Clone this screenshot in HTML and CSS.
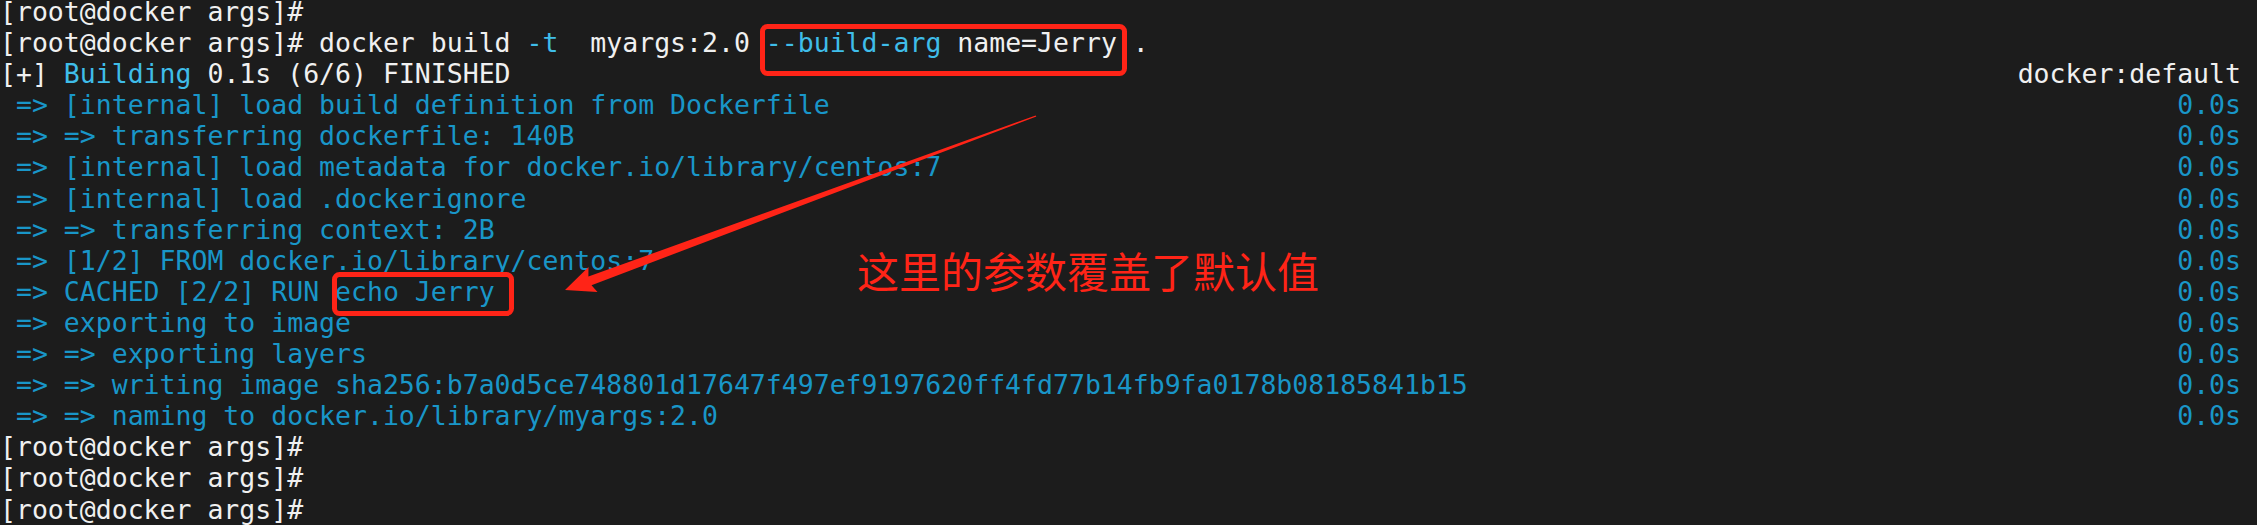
FILE: index.html
```html
<!DOCTYPE html>
<html lang="zh-CN">
<head>
<meta charset="utf-8">
<title>docker build</title>
<link rel="stylesheet" href="styles.css">
</head>
<body>
<div class="stage">
  <div class="term">
    <div class="ln"><span class="w">[root@docker args]#</span></div>
    <div class="ln"><span class="w">[root@docker args]# docker build <span class="lb">-t</span>  myargs:2.0 <span class="lb">--build-arg</span> name=Jerry .</span></div>
    <div class="ln"><span class="w">[+] <span class="lb">Building</span> 0.1s (6/6) FINISHED</span><span class="w">docker:default</span></div>
    <div class="ln b"><span> =&gt; [internal] load build definition from Dockerfile</span><span>0.0s</span></div>
    <div class="ln b"><span> =&gt; =&gt; transferring dockerfile: 140B</span><span>0.0s</span></div>
    <div class="ln b"><span> =&gt; [internal] load metadata for docker.io/library/centos:7</span><span>0.0s</span></div>
    <div class="ln b"><span> =&gt; [internal] load .dockerignore</span><span>0.0s</span></div>
    <div class="ln b"><span> =&gt; =&gt; transferring context: 2B</span><span>0.0s</span></div>
    <div class="ln b"><span> =&gt; [1/2] FROM docker.io/library/centos:7</span><span>0.0s</span></div>
    <div class="ln b"><span> =&gt; CACHED [2/2] RUN echo Jerry</span><span>0.0s</span></div>
    <div class="ln b"><span> =&gt; exporting to image</span><span>0.0s</span></div>
    <div class="ln b"><span> =&gt; =&gt; exporting layers</span><span>0.0s</span></div>
    <div class="ln b"><span> =&gt; =&gt; writing image sha256:b7a0d5ce748801d17647f497ef9197620ff4fd77b14fb9fa0178b08185841b15</span><span>0.0s</span></div>
    <div class="ln b"><span> =&gt; =&gt; naming to docker.io/library/myargs:2.0</span><span>0.0s</span></div>
    <div class="ln"><span class="w">[root@docker args]#</span></div>
    <div class="ln"><span class="w">[root@docker args]#</span></div>
    <div class="ln"><span class="w">[root@docker args]#</span></div>
  </div>
  <svg class="marks" width="2257" height="525" viewBox="0 0 2257 525" xmlns="http://www.w3.org/2000/svg">
    <rect x="762.5" y="26.5" width="362" height="47" rx="5" ry="5" fill="none" stroke="#ff2417" stroke-width="5"/>
    <rect x="334.5" y="274.5" width="177" height="39" rx="5" ry="5" fill="none" stroke="#ff2417" stroke-width="5"/>
    <polygon points="565,290 597.5,292 591.5,285.2 1036.4,116.5 1035.6,115.5 588.4,276.6 588.5,267" fill="#ff2417"/>
  </svg>
  <div class="note">这里的参数覆盖了默认值</div>
</div>
</body>
</html>
```

FILE: styles.css
```css
html, body {
  margin: 0;
  padding: 0;
  background: #1c1c1c;
}

.stage {
  position: relative;
  width: 2257px;
  height: 525px;
  overflow: hidden;
  display: flow-root;
}

.term {
  margin-top: -4px;
  width: 2241px;
  font-family: "DejaVu Sans Mono", monospace;
  font-size: 26.5px;
  line-height: 31.1px;
  color: #f0f0f0;
}

.ln {
  display: flex;
  justify-content: space-between;
  white-space: pre;
  height: 31.1px;
}

.w { color: #f0f0f0; }
.lb { color: #3fbde9; }
.b { color: #1996c8; }

.marks {
  position: absolute;
  left: 0;
  top: 0;
}

.note {
  position: absolute;
  left: 857px;
  top: 247px;
  font-family: "Noto Sans CJK SC", sans-serif;
  font-size: 42px;
  line-height: 46px;
  color: #ff2417;
  white-space: nowrap;
}
```
